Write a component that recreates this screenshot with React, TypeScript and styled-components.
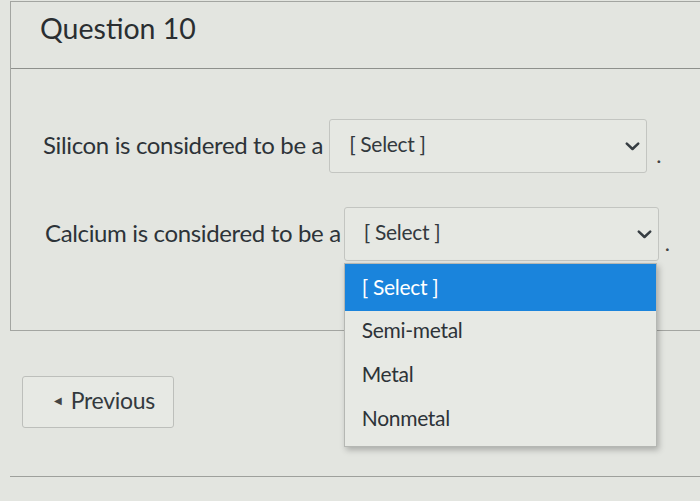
import * as React from 'react';
import styled, { createGlobalStyle } from 'styled-components';

const GlobalStyle = createGlobalStyle`
    html, body {
        margin: 0;
        padding: 0;
        background: #e3e5e0;
        font-family: Lato, "Open Sans", sans-serif;
        color: #2d3b45;
    }
`;

const options = ['[ Select ]', 'Semi-metal', 'Metal', 'Nonmetal'];

const Chevron = (): JSX.Element =>
    <svg width="15" height="9" viewBox="0 0 15 9">
        <path d="M1.8 1.6 L7.5 7 L13.2 1.6" fill="none" stroke="#363d42" strokeWidth="2.5" strokeLinecap="round" strokeLinejoin="round" />
    </svg>
;

const SelectBox = ({ width, open }: { width: number; open?: boolean }): JSX.Element =>
    <SelectWrap>
        <Select $width={width}>
            <SelectText>[ Select ]</SelectText>
            <Chevron />
        </Select>
        {open &&
            <Menu>
                {options.map((o, i) =>
                    <Option key={o} $active={i === 0}>{o}</Option>
                )}
            </Menu>
        }
    </SelectWrap>
;

export default function App(): JSX.Element {
    return (
        <Page>
            <GlobalStyle />
            <Card>
                <Header>Question 10</Header>
                <Body>
                    <Row $indent={32} $gap={6}>
                        <Label>Silicon is considered to be a</Label>
                        <SelectBox width={318} />
                        <Dot>.</Dot>
                    </Row>
                    <Row $indent={34} $gap={3}>
                        <Label>Calcium is considered to be a</Label>
                        <SelectBox width={315} open />
                        <Dot>.</Dot>
                    </Row>
                </Body>
            </Card>
            <Footer>
                <PrevButton>
                    <Arrow>◀</Arrow>
                    Previous
                </PrevButton>
            </Footer>
            <BottomLine />
        </Page>
    );
}

const Page = styled.div`
    width: 700px;
    height: 501px;
    overflow: hidden;
    padding-left: 10px;
    padding-top: 1px;
    box-sizing: border-box;
`;

const Card = styled.div`
    border: 1px solid #a3a5a1;
    border-right: none;
    height: 330px;
    box-sizing: border-box;
`;

const Header = styled.div`
    height: 67px;
    display: flex;
    align-items: center;
    padding-left: 29px;
    padding-bottom: 14px;
    box-sizing: border-box;
    font-size: 28.5px;
    color: #2a2e31;
    border-bottom: 1px solid #8e908c;
`;

const Body = styled.div`
    display: flex;
    flex-direction: column;
    gap: 34px;
    padding-top: 50px;
`;

const Row = styled.div<{ $indent: number; $gap: number }>`
    display: flex;
    align-items: center;
    padding-left: ${p => p.$indent}px;
    gap: ${p => p.$gap}px;
`;

const Label = styled.span`
    font-size: 24px;
    letter-spacing: -0.35px;
    color: #2d3338;
    padding-bottom: 4px;
`;

const SelectWrap = styled.div`
    position: relative;
`;

const Select = styled.div<{ $width: number }>`
    width: ${p => p.$width}px;
    height: 54px;
    box-sizing: border-box;
    border: 1px solid #c3c5c1;
    border-radius: 3px;
    background: #e6e8e3;
    display: flex;
    align-items: center;
    justify-content: space-between;
    padding: 0 6px 0 19px;
`;

const SelectText = styled.span`
    font-size: 21px;
    letter-spacing: -0.3px;
    color: #33393e;
    margin-top: -6px;
`;

const Dot = styled.span`
    font-size: 22px;
    color: #444;
    padding-top: 16px;
    margin-left: 3px;
`;

const Menu = styled.div`
    position: absolute;
    top: 56px;
    left: 0;
    width: 311px;
    background: #e7e9e4;
    border: 1px solid #b5b7b3;
    box-shadow: 2px 3px 6px rgba(0, 0, 0, 0.25);
    padding-bottom: 3px;
    z-index: 2;
`;

const Option = styled.div<{ $active: boolean }>`
    height: ${p => p.$active ? 47 : 44}px;
    display: flex;
    align-items: center;
    padding-left: 17px;
    padding-bottom: ${p => p.$active ? 2 : 7}px;
    box-sizing: border-box;
    font-size: 21px;
    letter-spacing: -0.3px;
    color: ${p => p.$active ? '#ffffff' : '#2d3338'};
    background: ${p => p.$active ? '#1a84dc' : 'transparent'};
`;

const Footer = styled.div`
    padding: 45px 0 0 12px;
    height: 145px;
    box-sizing: border-box;
`;

const PrevButton = styled.div`
    width: 152px;
    height: 52px;
    box-sizing: border-box;
    border: 1px solid #bdbfbb;
    border-radius: 3px;
    background: #e7e9e4;
    display: flex;
    align-items: center;
    padding-left: 31px;
    padding-bottom: 5px;
    gap: 9px;
    font-size: 23px;
    letter-spacing: -0.3px;
    color: #33393e;
`;

const Arrow = styled.span`
    font-size: 10px;
    color: #444;
`;

const BottomLine = styled.div`
    border-top: 1px solid #9ea09c;
`;
